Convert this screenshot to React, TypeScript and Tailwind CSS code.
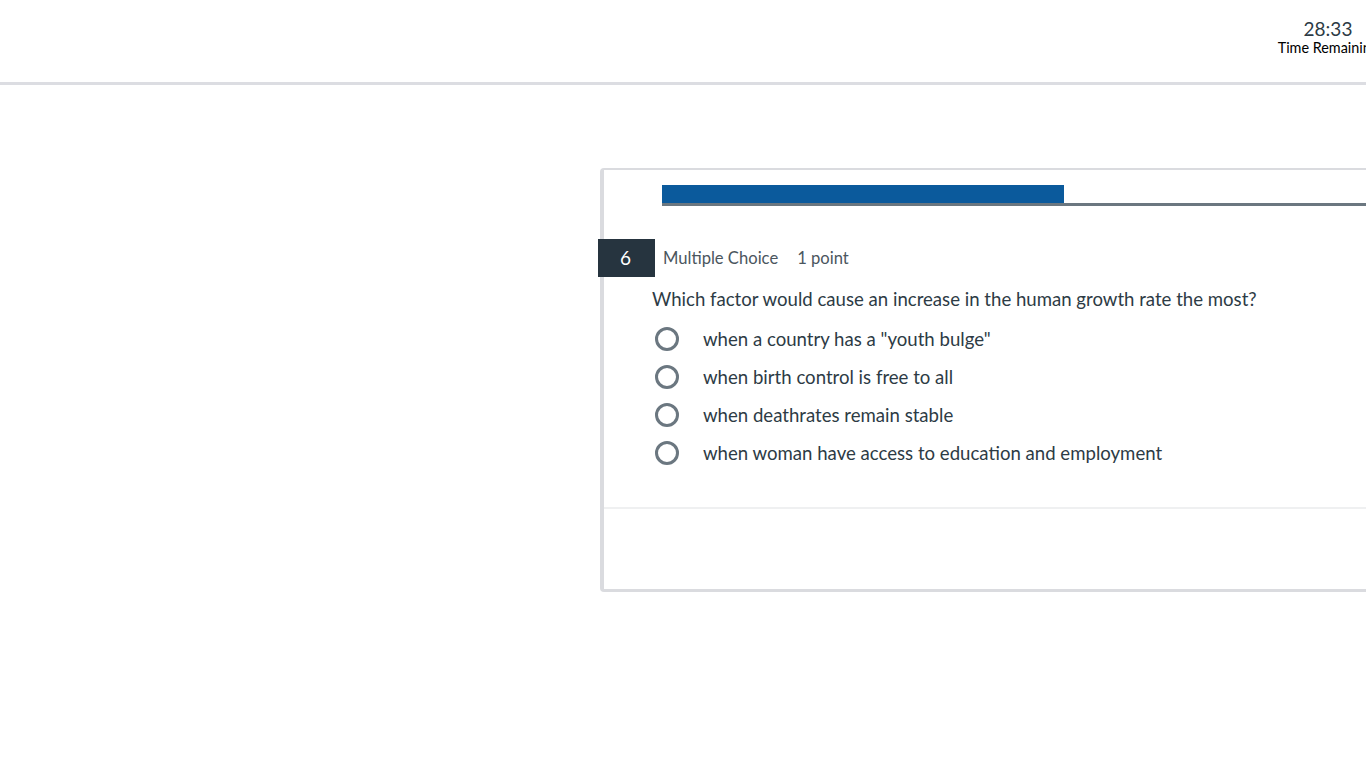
const options = [
  'when a country has a "youth bulge"',
  'when birth control is free to all',
  'when deathrates remain stable',
  'when woman have access to education and employment',
];

export default function App() {
  return (
    <div className="w-[1366px] h-[768px] overflow-hidden bg-white font-['Lato',sans-serif] text-[#2d3b45]">
      {/* Header with timer */}
      <div className="h-[85px] border-b-[3px] border-[#dcdde2] flex justify-end">
        <div className="w-[108px] -mr-[16px] pt-[17px] flex flex-col items-center">
          <div className="text-[19px] leading-[23px] text-[#2d3b45]">28:33</div>
          <div className="text-[14.4px] leading-[16px] text-black whitespace-nowrap">Time Remaining</div>
        </div>
      </div>

      {/* Question card */}
      <div className="ml-[600px] mt-[83px] w-[1000px] bg-white border-t-2 border-l-4 border-b-[3px] border-[#dadbdf] rounded-tl-[4px] rounded-bl-[4px]">
        {/* Progress bar */}
        <div className="pl-[58px] pt-[15px]">
          <div className="h-[21px] border-b-[3px] border-[#6b7780]">
            <div className="w-[402px] h-[18px] bg-[#0b5a9c]" />
          </div>
        </div>

        {/* Question header */}
        <div className="mt-[33px] -ml-[6px] flex items-center h-[38px]">
          <div className="w-[57px] h-[38px] bg-[#26343f] text-white text-[19px] flex items-center justify-center pr-[2px]">6</div>
          <span className="ml-[8px] text-[16.6px] text-[#4b565e]">Multiple Choice</span>
          <span className="ml-[19px] text-[16.6px] text-[#4b565e]">1 point</span>
        </div>

        {/* Question text */}
        <div className="pl-[48px] mt-[8px] text-[18.6px] leading-[28px]">
          Which factor would cause an increase in the human growth rate the most?
        </div>

        {/* Options */}
        <div className="mt-[7px] pl-[51px] flex flex-col">
          {options.map((o) => (
            <label key={o} className="h-[38px] flex items-center">
              <span className="w-[24px] h-[24px] rounded-full border-[3px] border-[#6b7780] shrink-0" />
              <span className="ml-[24px] text-[18.6px] leading-[28px]">{o}</span>
            </label>
          ))}
        </div>

        <div className="mt-[35px] h-[2px] bg-[#eff0f1]" />
        <div className="h-[80px]" />
      </div>
    </div>
  );
}
